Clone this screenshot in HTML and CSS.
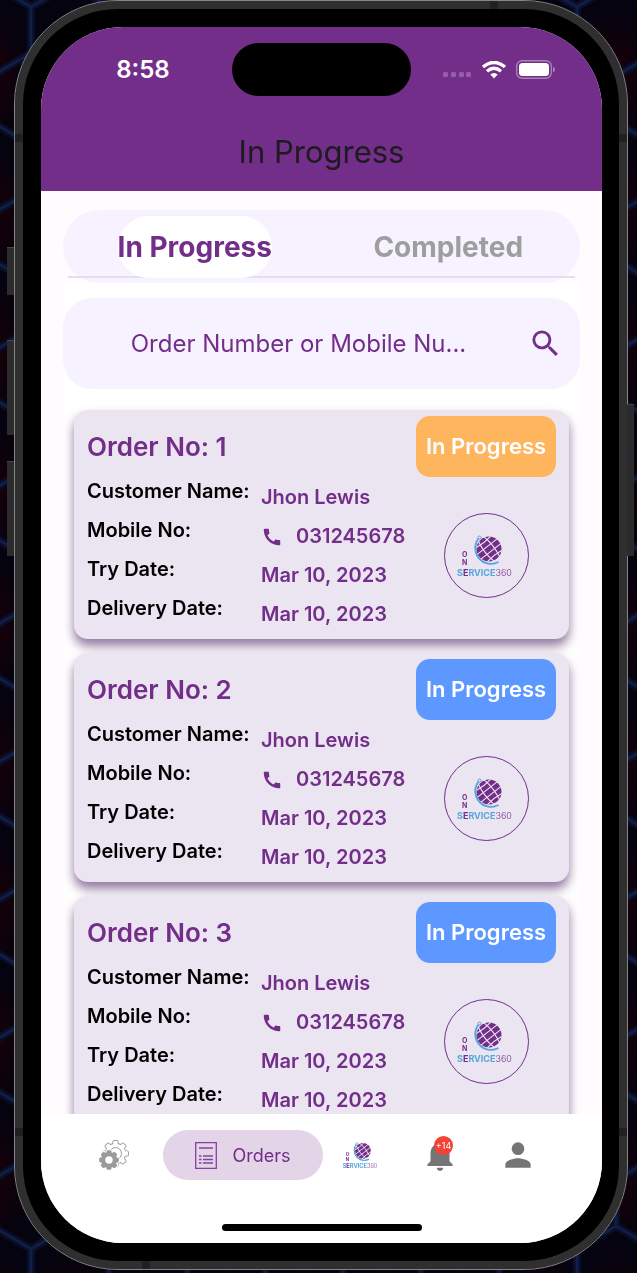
FILE: index.html
```html
<!DOCTYPE html>
<html lang="en">
<head>
<meta charset="utf-8">
<meta name="viewport" content="width=device-width, initial-scale=1">
<title>In Progress</title>
<link rel="stylesheet" href="styles.css">
</head>
<body>
<svg class="defs" aria-hidden="true">
  <symbol id="globe" viewBox="0 0 60 41">
    <circle cx="33" cy="14" r="12.500" fill="#722e89"/>
    <g class="globe-lines" fill="none" stroke-width="1.200" transform="translate(33 14) rotate(-38)">
      <path d="M-13 -3H13M-13 3H13M-9 -9Q0 -7.500 9 -9M-9 9Q0 7.500 9 9"/>
      <path d="M-3.500 -13Q-6.500 0 -3.500 13M3.500 -13Q6.500 0 3.500 13"/>
    </g>
    <path d="M22.500 3.500A15.800 15.800 0 0 0 42.500 27" fill="none" stroke="#56a5df" stroke-width="1.900"/>
    <circle cx="23.500" cy="2.500" r="1.500" fill="none" stroke="#56a5df"/>
  </symbol>
  <symbol id="call" viewBox="0 0 24 24">
    <path fill="currentColor" d="M20.010 15.380c-1.230 0-2.420-.2-3.530-.56a.98.98 0 0 0-1.010.24l-1.570 1.970c-2.830-1.350-5.480-3.900-6.890-6.830l1.950-1.660c.27-.28.35-.67.24-1.020-.37-1.110-.56-2.300-.56-3.530 0-.54-.45-.99-.99-.99H4.190C3.650 3 3 3.240 3 3.990 3 13.280 10.730 21 20.010 21c.71 0 .99-.63.99-1.180v-3.450c0-.54-.45-.99-.99-.99z"/>
  </symbol>
</svg>

<svg class="wallpaper" aria-hidden="true">
  <defs>
    <radialGradient id="glow"><stop offset="0" stop-color="#190008"/><stop offset="1" stop-color="#04030f"/></radialGradient>
    <pattern id="hex" width="78" height="138" patternUnits="userSpaceOnUse" patternTransform="translate(31 7)">
      <rect width="78" height="138" fill="#04030f"/>
      <rect width="78" height="138" fill="url(#glow)"/>
      <g fill="none" stroke="#080d28" stroke-width="8"><path d="M0 0V46L39 69V115L0 138M78 0V46L39 69M39 115L78 138M0 0L39 -23L78 0"/></g>
      <g fill="none" stroke="#111d45" stroke-width="3"><path d="M0 0V46L39 69V115L0 138M78 0V46L39 69M39 115L78 138M0 0L39 -23L78 0"/></g>
    </pattern>
  </defs>
  <rect width="100%" height="100%" fill="url(#hex)"/>
</svg>

<div class="phone">
  <i class="key key-action"></i><i class="key key-up"></i><i class="key key-down"></i><i class="key key-power"></i>
  <i class="seam seam-top"></i><i class="seam seam-left"></i><i class="seam seam-right"></i>
  <i class="seam seam-left seam-low"></i><i class="seam seam-right seam-low"></i><i class="seam seam-bottom"></i>
  <div class="screen">
    <header class="header">
      <div class="status">
        <time class="clock">8:58</time>
        <div class="island"></div>
        <div class="signals">
          <svg width="29" height="15" viewBox="0 0 29 15" fill="#9460a8"><rect y="10" width="5" height="5" rx="1.500"/><rect x="8" y="10" width="5" height="5" rx="1.500"/><rect x="16" y="10" width="5" height="5" rx="1.500"/><rect x="23" y="10" width="5" height="5" rx="1.500"/></svg>
          <svg width="24" height="18" viewBox="0 0 24 18" fill="none" stroke="#fff" stroke-width="3.400"><path d="M1 6Q12-3.200 23 6"/><path d="M5 10.300Q12 4.300 19 10.300"/><path d="M8.300 13.500Q12 10.500 15.700 13.500L12 17.500Z" fill="#fff" stroke="none"/></svg>
          <svg width="40" height="19" viewBox="0 0 40 19"><rect x=".7" y=".7" width="34.600" height="17.600" rx="5.500" fill="none" stroke="#a981b9" stroke-width="1.400"/><rect x="3" y="3" width="30" height="13" rx="3.500" fill="#fff"/><path d="M37 6.500q2 .8 2 3t-2 3z" fill="#a981b9"/></svg>
        </div>
      </div>
      <h1 class="title">In Progress</h1>
    </header>

    <main class="content">
      <div class="tab-bar">
        <div class="tabs" role="tablist">
          <button class="tab tab-active" role="tab" aria-selected="true"><span>In Progress</span></button>
          <button class="tab" role="tab" aria-selected="false"><span>Completed</span></button>
        </div>
      </div>
      <div class="panel">
        <form class="search">
          <input class="search-input" type="text" placeholder="Order Number or Mobile Nu..." aria-label="Order number or mobile number">
          <button class="search-button" type="button" aria-label="Search">
            <svg width="35" height="35" viewBox="0 0 24 24" fill="currentColor"><path d="M15.500 14h-.79l-.28-.27A6.470 6.470 0 0 0 16 9.500 6.500 6.500 0 1 0 9.500 16c1.610 0 3.090-.59 4.230-1.570l.27.28v.79l5 4.990L20.490 19l-4.990-5zm-6 0C7.010 14 5 11.990 5 9.500S7.010 5 9.500 5 14 7.010 14 9.500 11.990 14 9.500 14z"/></svg>
          </button>
        </form>

        <article class="card">
          <div class="info">
            <h2 class="order">Order No: 1</h2>
            <dl class="details">
              <dt>Customer Name:</dt><dd>Jhon Lewis</dd>
              <dt>Mobile No:</dt><dd><svg class="call"><use href="#call"/></svg>031245678</dd>
              <dt>Try Date:</dt><dd>Mar 10, 2023</dd>
              <dt>Delivery Date:</dt><dd>Mar 10, 2023</dd>
            </dl>
          </div>
          <div class="side">
            <span class="badge badge-orange">In Progress</span>
            <div class="avatar">
              <svg class="logo" viewBox="0 0 60 41">
                <use href="#globe"/>
                <text class="stack" x="6" y="22">O</text><text class="stack" x="6" y="30">N</text>
                <text x="1" y="41" class="blue">S<tspan class="plum">E</tspan>RVICE<tspan class="thin">360</tspan></text>
              </svg>
            </div>
          </div>
        </article>

        <article class="card">
          <div class="info">
            <h2 class="order">Order No: 2</h2>
            <dl class="details">
              <dt>Customer Name:</dt><dd>Jhon Lewis</dd>
              <dt>Mobile No:</dt><dd><svg class="call"><use href="#call"/></svg>031245678</dd>
              <dt>Try Date:</dt><dd>Mar 10, 2023</dd>
              <dt>Delivery Date:</dt><dd>Mar 10, 2023</dd>
            </dl>
          </div>
          <div class="side">
            <span class="badge">In Progress</span>
            <div class="avatar">
              <svg class="logo" viewBox="0 0 60 41">
                <use href="#globe"/>
                <text class="stack" x="6" y="22">O</text><text class="stack" x="6" y="30">N</text>
                <text x="1" y="41" class="blue">S<tspan class="plum">E</tspan>RVICE<tspan class="thin">360</tspan></text>
              </svg>
            </div>
          </div>
        </article>

        <article class="card">
          <div class="info">
            <h2 class="order">Order No: 3</h2>
            <dl class="details">
              <dt>Customer Name:</dt><dd>Jhon Lewis</dd>
              <dt>Mobile No:</dt><dd><svg class="call"><use href="#call"/></svg>031245678</dd>
              <dt>Try Date:</dt><dd>Mar 10, 2023</dd>
              <dt>Delivery Date:</dt><dd>Mar 10, 2023</dd>
            </dl>
          </div>
          <div class="side">
            <span class="badge">In Progress</span>
            <div class="avatar">
              <svg class="logo" viewBox="0 0 60 41">
                <use href="#globe"/>
                <text class="stack" x="6" y="22">O</text><text class="stack" x="6" y="30">N</text>
                <text x="1" y="41" class="blue">S<tspan class="plum">E</tspan>RVICE<tspan class="thin">360</tspan></text>
              </svg>
            </div>
          </div>
        </article>
      </div>
    </main>

    <footer class="footer">
      <nav class="nav">
        <button class="nav-item" aria-label="Settings">
          <svg width="30" height="30" viewBox="0 0 30 30">
            <defs>
              <g id="cog-big"><circle r="9.800"/><g id="cog-teeth"><rect x="-2.200" y="-12.500" width="4.400" height="25" rx="1"/><rect x="-12.500" y="-2.200" width="25" height="4.400" rx="1"/></g><use href="#cog-teeth" transform="rotate(45)"/></g>
              <g id="cog-small"><circle r="8"/><g id="cog-nubs"><rect x="-2.400" y="-9.800" width="4.800" height="19.600" rx="1.300"/><rect x="-9.800" y="-2.400" width="19.600" height="4.800" rx="1.300"/></g><use href="#cog-nubs" transform="rotate(45)"/></g>
            </defs>
            <use href="#cog-big" transform="translate(16.500 13.500)" fill="#9b9b9b" stroke="#9b9b9b" stroke-width="1.800"/>
            <use href="#cog-big" transform="translate(16.500 13.500)" fill="#fff"/>
            <circle cx="16.500" cy="13.500" r="6" fill="#fff" stroke="#9b9b9b"/>
            <use href="#cog-small" transform="translate(10 20)" fill="#fff" stroke="#fff" stroke-width="2"/>
            <use href="#cog-small" transform="translate(10 20)" fill="#9b9b9b"/>
            <circle cx="10" cy="20" r="3.700" fill="#fff"/>
          </svg>
        </button>
        <button class="nav-item nav-active">
          <svg width="22" height="27" viewBox="0 0 22 27" fill="none" stroke="#8442a0" stroke-width="1.300"><path d="M.7.7H21.300V26.300H.7ZM4 6H18M4 14H6.500M8 14H18M4 17.500H6.500M8 17.500H18M4 21H6.500M8 21H18"/></svg>
          <span>Orders</span>
        </button>
        <button class="nav-item" aria-label="Home">
          <svg class="logo logo-small" viewBox="0 0 60 41">
            <use href="#globe"/>
            <text class="stack" x="6" y="22">O</text><text class="stack" x="6" y="30">N</text>
            <text x="1" y="41" class="blue">S<tspan class="plum">E</tspan>RVICE<tspan class="thin">360</tspan></text>
          </svg>
        </button>
        <button class="nav-item" aria-label="Notifications">
          <span class="bell">
            <svg width="38" height="38" viewBox="0 0 24 24" fill="#757575"><path d="M12 22c1.100 0 2-.9 2-2h-4c0 1.100.9 2 2 2zm6-6v-5c0-3.070-1.640-5.640-4.500-6.320V4a1.500 1.500 0 0 0-3 0v.68C7.630 5.360 6 7.920 6 11v5l-2 2v1h16v-1l-2-2z"/></svg>
            <span class="count">+14</span>
          </span>
        </button>
        <button class="nav-item" aria-label="Profile">
          <svg width="38" height="38" viewBox="0 0 24 24" fill="#757575"><path d="M12 12a4 4 0 1 0 0-8 4 4 0 0 0 0 8zm0 2c-2.670 0-8 1.340-8 4v2h16v-2c0-2.660-5.330-4-8-4z"/></svg>
        </button>
      </nav>
      <div class="home-bar"></div>
    </footer>
  </div>
</div>
</body>
</html>
```
FILE: styles.css
```css
* { box-sizing: border-box; }
body {
  margin: 0;
  height: 100vh;
  padding: 0 9px 3px 14px;
  background: #04030f;
  font-family: Inter, "Liberation Sans", sans-serif;
  color: #722e89;
  overflow: hidden;
}
button { border: 0; padding: 0; background: none; font: inherit; color: inherit; }
svg { display: block; flex: none; }
.defs { position: absolute; width: 0; height: 0; }
.wallpaper { position: fixed; inset: 0; width: 100%; height: 100%; }

/* Device */
.phone {
  position: relative;
  height: 100%;
  padding: 26px 25px 26px 26px;
  border: 1px solid #858585;
  border-radius: 104px;
  background: #000;
  box-shadow: inset 0 0 0 8px #2f2f2f;
}
.key { position: absolute; width: 7px; background: #2b2b2b; border-top: 1px solid #444; }
.key-action { left: -8px; top: 246px; height: 48px; }
.key-up { left: -8px; top: 339px; height: 95px; }
.key-down { left: -8px; top: 460px; height: 95px; }
.key-power { right: -7px; top: 403px; height: 152px; }
.seam { position: absolute; background: #202020; width: 8px; height: 8px; }
.seam-top { top: 0; right: 129px; }
.seam-left { left: 0; top: 133px; }
.seam-right { right: 0; top: 133px; }
.seam-low { top: auto; bottom: 133px; }
.seam-bottom { bottom: 0; left: 127px; }
.screen {
  height: 100%;
  display: flex;
  flex-direction: column;
  overflow: hidden;
  border-radius: 82px;
  background: #fffbff;
}

/* Header */
.header { background: #722e89; padding-top: 16px; height: 164px; flex: none; }
.status { display: grid; grid-template-columns: 1fr 179px 1fr; align-items: center; }
.island { height: 53px; border-radius: 27px; background: #000; }
.clock { padding-left: 13px; text-align: center; font-size: 24px; font-weight: 600; color: #fff; }
.signals { display: flex; align-items: center; justify-content: flex-end; gap: 10px; padding-right: 46px; }
.title {
  margin: 36px 0 0;
  text-align: center;
  font-size: 31px;
  line-height: 40px;
  font-weight: 400;
  color: #1e1b20;
}

/* Content */
.content { flex: 1; min-height: 0; overflow: hidden; padding: 19px 22px 0; }
.tab-bar { padding: 6px 5px 5px; border-radius: 37px; background: #f7f2ff; }
.tabs {
  display: grid;
  grid-template-columns: 1fr 1fr;
  background: linear-gradient(#e6deee, #e6deee) bottom / 100% 2px no-repeat;
}
.tab { display: flex; justify-content: center; font-size: 28px; font-weight: 700; line-height: 62px; color: #9e9e9e; }
.tab-active { color: #722e89; }
.tab-active span { background: #fff; border-radius: 31px; }
.panel { background: #fff; padding-top: 15px; }
.search {
  display: flex;
  align-items: center;
  height: 91px;
  margin-bottom: 21px;
  padding: 0 17px;
  border-radius: 29px;
  background: #f7f2ff;
}
.search-input {
  flex: 1;
  min-width: 0;
  border: 0;
  padding: 0 11px 0 0;
  background: none;
  outline: 0;
  text-align: center;
  font: 400 24px Inter, sans-serif;
  color: #722e89;
}
.search-input::placeholder { color: #722e89; opacity: 1; }

/* Order cards */
.card {
  display: flex;
  justify-content: space-between;
  margin: 0 11px 14px;
  padding: 6px 13px 11px;
  border-radius: 14px;
  background: #ebe5f1;
  box-shadow: 0 7px 11px rgba(75, 30, 95, .6);
}
.order { margin: 0; padding-top: 6px; font-size: 26px; line-height: 50px; font-weight: 600; }
.details {
  display: grid;
  grid-template-columns: 174px auto;
  margin: 0;
  font-size: 20px;
  font-weight: 600;
  white-space: nowrap;
}
.details dt { line-height: 39px; color: #000; }
.details dd { display: flex; align-items: center; margin: 0; padding-top: 12px; line-height: 27px; }
.call { width: 22px; height: 22px; margin-right: 13px; }
.side { display: flex; flex-direction: column; align-items: center; gap: 36px; }
.badge {
  width: 140px;
  border-radius: 14px;
  background: #5c98ff;
  color: #fff;
  text-align: center;
  font-size: 22px;
  font-weight: 600;
  line-height: 61px;
  white-space: nowrap;
}
.badge-orange { background: #ffb55e; }
.avatar {
  display: grid;
  place-items: center;
  width: 85px;
  height: 85px;
  border: 1px solid #722e89;
  border-radius: 50%;
}

/* Logo */
.logo {
  width: 60px;
  height: 41px;
  overflow: visible;
  font: 700 9px Inter, sans-serif;
  fill: #722e89;
  stroke: none;
}
.logo-small { width: 38px; height: 26px; --gap: #fff; }
.globe-lines { stroke: var(--gap, #ebe5f1); }
.stack { font-size: 7px; }
.blue { fill: #56a5df; }
.plum, .thin { fill: #722e89; }
.thin { font-weight: 300; }

/* Bottom navigation */
.footer { flex: none; display: flex; flex-direction: column; align-items: center; gap: 44px; padding: 16px 0 12px; background: #fff; }
.nav {
  align-self: stretch;
  display: grid;
  grid-template-columns: 74fr 160px 52fr 82fr 50fr;
  gap: 12px;
  padding: 0 59px 0 36px;
}
.nav-item { display: flex; align-items: center; justify-content: center; height: 50px; }
.nav-active { gap: 15px; border-radius: 25px; background: #e3d4e8; font-size: 18px; }
.bell { position: relative; }
.count {
  position: absolute;
  top: 0;
  right: 6px;
  width: 19px;
  border-radius: 50%;
  background: #f44336;
  color: #fff;
  text-align: center;
  font-size: 9px;
  line-height: 19px;
}
.home-bar { width: 200px; height: 7px; border-radius: 4px; background: #000; }
```
